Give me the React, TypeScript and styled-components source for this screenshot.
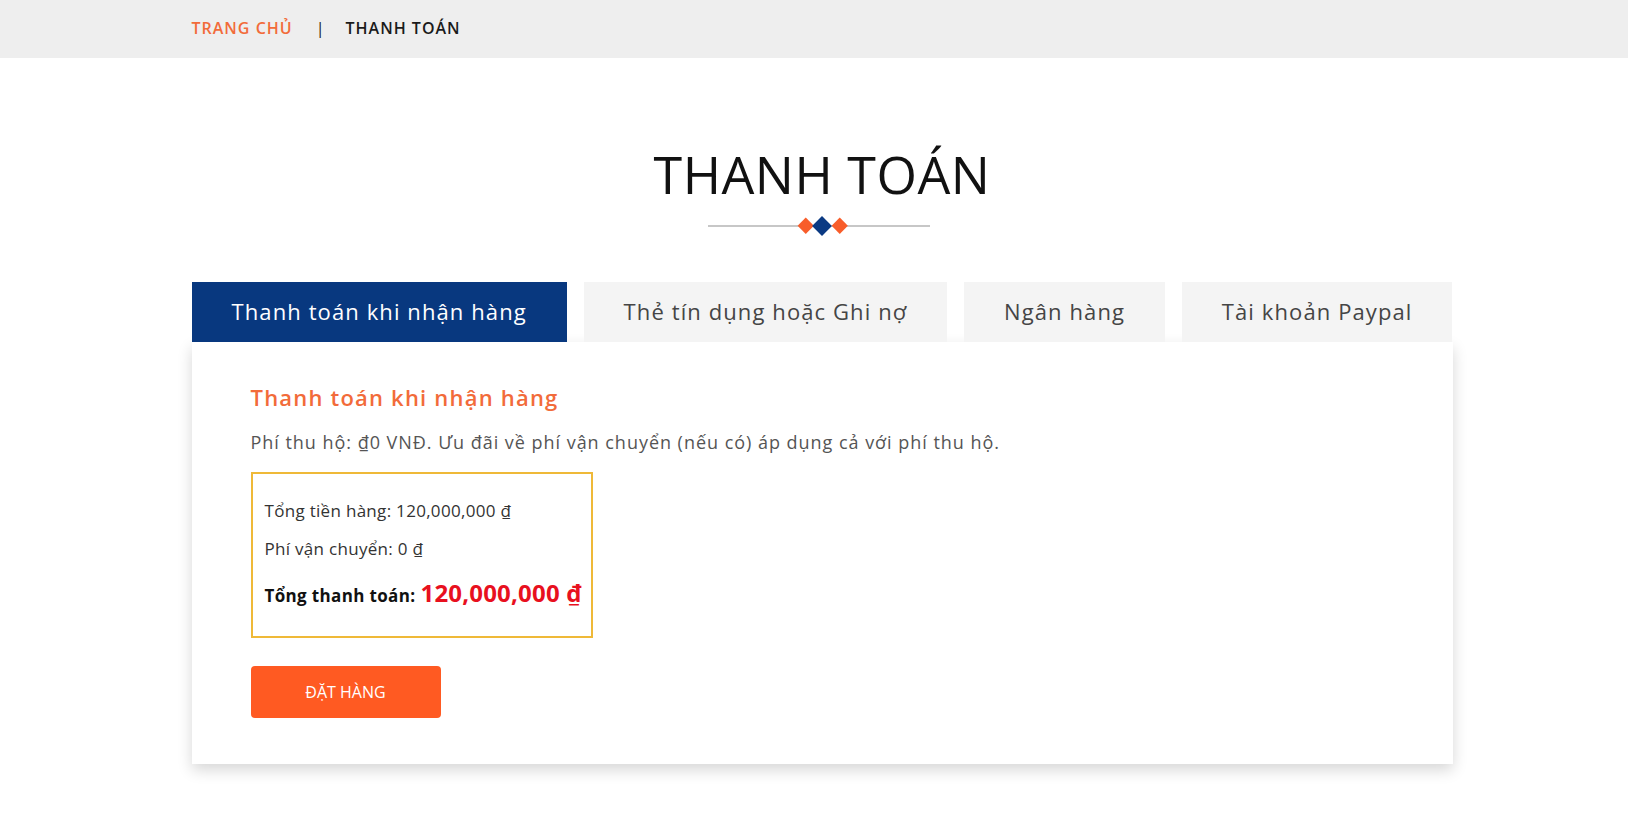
import React from "react";
import styled, { createGlobalStyle } from "styled-components";

const GlobalStyle = createGlobalStyle`
  * { box-sizing: border-box; }
  html, body { margin: 0; padding: 0; background: #fff; }
  body { font-family: "Open Sans", "Noto Sans", Arial, sans-serif; color: #333; }
`;

const TopBar = styled.header`
  height: 58px;
  background: #eeeeee;
  padding-left: 16px;
`;

const Container = styled.div`
  width: 1261px;
  margin: 0 auto;
`;

const Page = styled.main`
  padding: 0 0 72px 16px;
`;

const Breadcrumb = styled.nav`
  display: flex;
  align-items: center;
  height: 56px;
  font-size: 16px;
  font-weight: 600;
  letter-spacing: 1px;
  text-transform: uppercase;
`;

const Crumb = styled.span<{ $active?: boolean }>`
  color: ${(p) => (p.$active ? "#1b1b1b" : "#f26b3a")};
`;

const Sep = styled.span`
  color: #1b1b1b;
  margin: 0 20px 0 23px;
  font-weight: 400;
`;

const Title = styled.h1`
  margin: 85px 0 0;
  text-align: center;
  font-size: 52px;
  line-height: 62px;
  font-weight: 400;
  color: #111;
  letter-spacing: 0.5px;
`;

const Divider = styled.div`
  display: flex;
  justify-content: center;
  margin-top: 11px;
  padding-right: 6px;
  height: 20px;
`;

const Tabs = styled.div`
  display: flex;
  justify-content: space-between;
  margin-top: 46px;
`;

const Tab = styled.button<{ $active?: boolean }>`
  height: 60px;
  padding: 0 40px 3px;
  border: none;
  font-family: inherit;
  font-size: 22px;
  letter-spacing: 1.1px;
  font-weight: 400;
  background: ${(p) => (p.$active ? "#08387f" : "#f4f4f4")};
  color: ${(p) => (p.$active ? "#ffffff" : "#454545")};
  cursor: pointer;
`;

const Card = styled.section`
  background: #fff;
  padding: 40px 59px 46px;
  box-shadow: 0 6px 14px rgba(0, 0, 0, 0.16);
`;

const Heading = styled.h2`
  margin: 0;
  font-size: 22px;
  line-height: 30px;
  font-weight: 600;
  color: #f26b3a;
  letter-spacing: 1.2px;
`;

const Note = styled.p`
  margin: 17px 0 0;
  font-size: 18px;
  line-height: 26px;
  color: #555;
  letter-spacing: 0.97px;
`;

const SummaryBox = styled.div`
  width: 342px;
  margin-top: 17px;
  border: 2px solid #efb938;
  padding: 25px 6px 24px 12px;
  display: flex;
  flex-direction: column;
`;

const Line = styled.div<{ $gap: number; $lh: number }>`
  margin-top: ${(p) => p.$gap}px;
  font-size: 17px;
  line-height: ${(p) => p.$lh}px;
  letter-spacing: 0.3px;
  color: #333;
  white-space: nowrap;
`;

const Strong = styled.strong`
  font-weight: 700;
  color: #111;
  letter-spacing: 0.35px;
`;

const Price = styled.span`
  font-size: 24px;
  font-weight: 700;
  color: #e8101e;
  margin-left: 5px;
  letter-spacing: 0.2px;
`;

const OrderButton = styled.button`
  margin-top: 28px;
  width: 190px;
  height: 52px;
  border: none;
  border-radius: 4px;
  background: #ff5a22;
  color: #fff;
  font-family: inherit;
  font-size: 16px;
  font-weight: 500;
  text-transform: uppercase;
  cursor: pointer;
`;

function Ornament() {
  return (
    <svg width="222" height="20" viewBox="0 0 222 20">
      <line x1="0" y1="10" x2="222" y2="10" stroke="#b5b5b5" strokeWidth="1.5" />
      <rect x="92" y="4" width="11.5" height="11.5" fill="#f85d2a" transform="rotate(45 97.75 9.75)" />
      <rect x="107" y="3" width="14" height="14" fill="#0b3a83" transform="rotate(45 114 10)" />
      <rect x="126" y="4" width="11.5" height="11.5" fill="#f85d2a" transform="rotate(45 131.75 9.75)" />
    </svg>
  );
}

export default function App() {
  return (
    <>
      <GlobalStyle />
      <TopBar>
        <Container>
          <Breadcrumb>
            <Crumb>Trang chủ</Crumb>
            <Sep>|</Sep>
            <Crumb $active>Thanh toán</Crumb>
          </Breadcrumb>
        </Container>
      </TopBar>
      <Page>
        <Container>
          <Title>THANH TOÁN</Title>
          <Divider>
            <Ornament />
          </Divider>
          <Tabs>
            <Tab $active>Thanh toán khi nhận hàng</Tab>
            <Tab>Thẻ tín dụng hoặc Ghi nợ</Tab>
            <Tab>Ngân hàng</Tab>
            <Tab>Tài khoản Paypal</Tab>
          </Tabs>
          <Card>
            <Heading>Thanh toán khi nhận hàng</Heading>
            <Note>Phí thu hộ: ₫0 VNĐ. Ưu đãi về phí vận chuyển (nếu có) áp dụng cả với phí thu hộ.</Note>
            <SummaryBox>
              <Line $gap={0} $lh={24}>Tổng tiền hàng: 120,000,000 ₫</Line>
              <Line $gap={14} $lh={24}>Phí vận chuyển: 0 ₫</Line>
              <Line $gap={16} $lh={32}>
                <Strong>Tổng thanh toán:</Strong>
                <Price>120,000,000 ₫</Price>
              </Line>
            </SummaryBox>
            <OrderButton>Đặt hàng</OrderButton>
          </Card>
        </Container>
      </Page>
    </>
  );
}
